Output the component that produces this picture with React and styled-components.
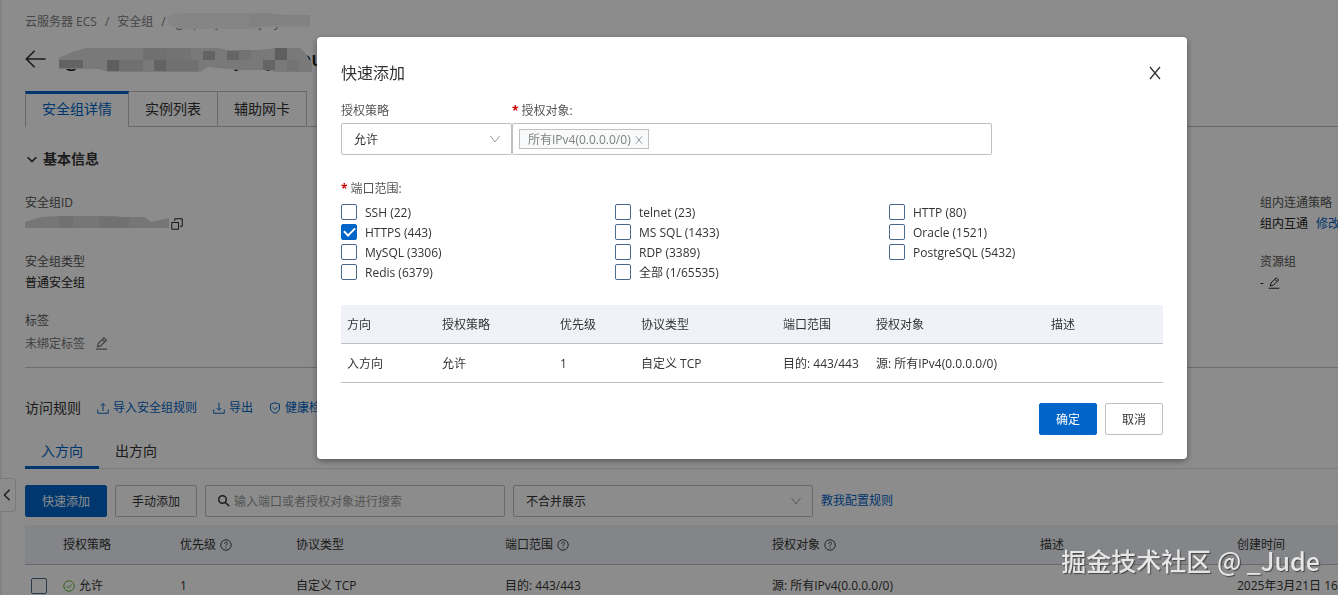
import React, { useState } from 'react';
import styled, { createGlobalStyle, css } from 'styled-components';

const PORTS = [
    'SSH (22)',
    'telnet (23)',
    'HTTP (80)',
    'HTTPS (443)',
    'MS SQL (1433)',
    'Oracle (1521)',
    'MySQL (3306)',
    'RDP (3389)',
    'PostgreSQL (5432)',
    'Redis (6379)',
    '全部 (1/65535)',
];

const RULE_COLUMNS = [
    { label: '授权策略', width: 117 },
    { label: '优先级', width: 116, help: true },
    { label: '协议类型', width: 209 },
    { label: '端口范围', width: 267, help: true },
    { label: '授权对象', width: 268, help: true },
    { label: '描述', width: 197 },
    { label: '创建时间' },
];

const PREVIEW_COLUMNS = [
    { label: '方向', width: 95, value: '入方向' },
    { label: '授权策略', width: 118, value: '允许' },
    { label: '优先级', width: 81, value: '1' },
    { label: '协议类型', width: 142, value: '自定义 TCP' },
    { label: '端口范围', width: 93, value: '目的: 443/443' },
    { label: '授权对象', width: 175, value: '源: 所有IPv4(0.0.0.0/0)' },
    { label: '描述', value: '' },
];

const ICONS = {
    back: <path d="M15 8H1M7 2L1 8l6 6" />,
    chevron: <path d="M3 6l5 5 5-5" />,
    down: <path d="M2 4l6 8 6-8" />,
    left: <path d="M11 2L5 8l6 6" />,
    close: <path d="M3 2l10 12M13 2L3 14" />,
    copy: <path d="M1 6h9v9H1zM5 4V1h10v10h-3" />,
    edit: <path d="M1 15h14M3 12l1-4 7-7 3 3-7 7zM9 3l3 3" />,
    upload: <path d="M1 10v5h14v-5M8 12V2M5 5l3-3 3 3" />,
    download: <path d="M1 10v5h14v-5M8 1v10M5 8l3 3 3-3" />,
    shield: <path d="M8 1l6 2v5c0 4-3 6-6 7-3-1-6-3-6-7V3zM5 7l3 3 4-4" />,
    search: <path d="M11 6a5 5 0 1 1-10 0a5 5 0 1 1 10 0M10 10l5 5" />,
    help: (
        <React.Fragment>
            <circle cx="8" cy="8" r="7" />
            <path d="M6 6.500c0-3 4-3 4-.5 0 1.600-2 1.600-2 3.500M8 11v1.400" />
        </React.Fragment>
    ),
    ok: (
        <React.Fragment>
            <circle cx="8" cy="8" r="7" />
            <path d="M5 8l2.500 2.500 4-4.500" />
        </React.Fragment>
    ),
};

const Icon = ({ name, size = 12, weight = 1.3 }) => (
    <IconSvg viewBox="0 0 16 16" width={size} height={size} strokeWidth={weight} aria-hidden="true">
        {ICONS[name]}
    </IconSvg>
);

const CrumbMask = () => (
    <Mask width="144" height="22" viewBox="0 0 144 22" aria-hidden="true">
        <g fill="#808080" fontSize="12">
            <text x="10" y="16">g</text>
            <text x="27" y="16">p</text>
            <text x="50" y="16">j</text>
            <text x="93" y="16">j</text>
            <text x="108" y="16">y</text>
        </g>
        <path d="M2 6Q6 2 20 2h60q20-1 30 2h34v12h-44l-10 2H20Q0 18 2 6z" fill="#f3f3f3" />
        <path d="M84 3l16-1 22 2h22v10h-30l-30 2z" fill="#ebebeb" />
    </Mask>
);

const TitleMask = () => (
    <Mask width="262" height="30" viewBox="0 0 262 30" aria-hidden="true">
        <g fill="#222" fontSize="20" fontWeight="600">
            <text x="8" y="22">g</text>
            <text x="46" y="22">p</text>
            <text x="176" y="22">y</text>
            <text x="208" y="22">y</text>
            <text x="241" y="22">ou</text>
        </g>
        <path d="M1 14l13-6 14-4h132l10 2h30l20-2h22l6 6 6 10v8h-34l-12-2h-28l-30-3-8 5H50l-9-3H1z" fill="#dcdcdc" />
        <path d="M1 16h24v8H1zM96 16h12v11H96zM145 7h12v9h-12z" fill="#b4b4b4" />
        <path d="M49 16h12v11H49zM217 4h12v12h-12z" fill="#acacac" />
        <path d="M85 4h24v12H85zM61 16h24v11H61zM108 16h32v11h-32z" fill="#cccccc" />
        <path d="M169 7h12v9h-12zM205 16h12v10h-12z" fill="#b8b8b8" />
        <path d="M109 4h24v12h-24zM181 6h12v10h-12zM229 16h12v11h-12z" fill="#d2d2d2" />
    </Mask>
);

const IdMask = () => (
    <Mask width="144" height="16" viewBox="0 0 144 16" aria-hidden="true">
        <path d="M0 6l16-5 18-1h54l12 1h20l6 5 18-4v10H0z" fill="#d8d8d8" />
        <path d="M34 0h14v12H34zM74 1h30v11H74z" fill="#cecece" />
    </Mask>
);

const DetailsPage = () => (
    <Page>
        <SideHandle aria-label="收起">
            <Icon name="left" size={14} weight={1.6} />
        </SideHandle>
        <Breadcrumb>
            <CrumbLink href="#ecs">云服务器 ECS</CrumbLink>
            <Slash>/</Slash>
            <CrumbLink href="#groups">安全组</CrumbLink>
            <Slash>/</Slash>
            <CrumbMask />
        </Breadcrumb>
        <TitleRow>
            <IconButton aria-label="返回">
                <Icon name="back" size={22} weight={1.2} />
            </IconButton>
            <TitleMask />
        </TitleRow>
        <Tabs>
            <Tab $active>安全组详情</Tab>
            <Tab>实例列表</Tab>
            <Tab>辅助网卡</Tab>
        </Tabs>
        <SectionTitle>
            <Icon name="chevron" size={14} weight={2} />
            基本信息
        </SectionTitle>
        <InfoGrid>
            <Info $gap={2}>
                <dt>安全组ID</dt>
                <dd>
                    <IdMask />
                    <Icon name="copy" size={12} />
                </dd>
            </Info>
            <Info $gap={8}>
                <dt>组内连通策略</dt>
                <dd>
                    组内互通<TextLink href="#edit">修改</TextLink>
                </dd>
            </Info>
            <Info>
                <dt>安全组类型</dt>
                <dd>普通安全组</dd>
            </Info>
            <Info $gap={4}>
                <dt>资源组</dt>
                <dd>
                    -<Icon name="edit" size={12} />
                </dd>
            </Info>
            <Info $gap={10} $muted>
                <dt>标签</dt>
                <dd>
                    未绑定标签 <Icon name="edit" size={13} weight={1.5} />
                </dd>
            </Info>
        </InfoGrid>
        <RuleHeader>
            <h2>访问规则</h2>
            <TextLink href="#import">
                <Icon name="upload" />
                导入安全组规则
            </TextLink>
            <TextLink href="#export">
                <Icon name="download" />
                导出
            </TextLink>
            <TextLink href="#check">
                <Icon name="shield" />
                健康检查
            </TextLink>
        </RuleHeader>
        <DirectionTabs>
            <Direction $active>入方向</Direction>
            <Direction>出方向</Direction>
        </DirectionTabs>
        <Toolbar>
            <Button $primary>快速添加</Button>
            <Button>手动添加</Button>
            <SearchBox>
                <Icon name="search" weight={2} />
                <input aria-label="搜索" placeholder="输入端口或者授权对象进行搜索" />
            </SearchBox>
            <SelectBox $width={300}>
                <select aria-label="展示方式">
                    <option>不合并展示</option>
                </select>
                <Icon name="down" />
            </SelectBox>
            <TextLink href="#guide">教我配置规则</TextLink>
        </Toolbar>
        <Table $pad={8} $head={40} $row={41}>
            <colgroup>
                <col width={30} />
                {RULE_COLUMNS.map(({ label, width }) => (
                    <col key={label} width={width} />
                ))}
            </colgroup>
            <thead>
                <tr>
                    <th />
                    {RULE_COLUMNS.map(({ label, help }) => (
                        <th key={label}>
                            <CellContent>
                                {label}
                                {help ? <Icon name="help" weight={1.2} /> : null}
                            </CellContent>
                        </th>
                    ))}
                </tr>
            </thead>
            <tbody>
                <tr>
                    <CheckCell>
                        <Checkbox aria-label="选择规则" />
                    </CheckCell>
                    <td>
                        <CellContent>
                            <Allowed>
                                <Icon name="ok" />
                            </Allowed>
                            允许
                        </CellContent>
                    </td>
                    <td>1</td>
                    <td>自定义 TCP</td>
                    <td>目的: 443/443</td>
                    <td>源: 所有IPv4(0.0.0.0/0)</td>
                    <td />
                    <td>2025年3月21日 16:4</td>
                </tr>
            </tbody>
        </Table>
    </Page>
);

const QuickAdd = () => {
    const [checked, setChecked] = useState(['HTTPS (443)']);
    const toggle = port =>
        setChecked(checked.includes(port) ? checked.filter(p => p !== port) : [...checked, port]);

    return (
        <Overlay>
            <Modal role="dialog" aria-labelledby="quick-add">
                <ModalHeader>
                    <h1 id="quick-add">快速添加</h1>
                    <IconButton aria-label="关闭">
                        <Icon name="close" size={16} />
                    </IconButton>
                </ModalHeader>
                <FieldRow>
                    <Field>
                        <Label htmlFor="policy">授权策略</Label>
                        <SelectBox $width={171}>
                            <select id="policy">
                                <option>允许</option>
                            </select>
                            <Icon name="down" />
                        </SelectBox>
                    </Field>
                    <Field $grow>
                        <Label htmlFor="target" $required>
                            授权对象:
                        </Label>
                        <TagInput>
                            <Tag>
                                所有IPv4(0.0.0.0/0)
                                <IconButton aria-label="移除">
                                    <Icon name="close" size={10} />
                                </IconButton>
                            </Tag>
                            <input id="target" />
                        </TagInput>
                    </Field>
                </FieldRow>
                <Ports>
                    <Legend>端口范围:</Legend>
                    <PortGrid>
                        {PORTS.map(port => (
                            <PortLabel key={port}>
                                <Checkbox
                                    checked={checked.includes(port)}
                                    onChange={() => toggle(port)}
                                />
                                <span>{port}</span>
                            </PortLabel>
                        ))}
                    </PortGrid>
                </Ports>
                <Table $pad={6} $head={39} $row={39}>
                    <colgroup>
                        {PREVIEW_COLUMNS.map(({ label, width }) => (
                            <col key={label} width={width} />
                        ))}
                    </colgroup>
                    <thead>
                        <tr>
                            {PREVIEW_COLUMNS.map(({ label }) => (
                                <th key={label}>{label}</th>
                            ))}
                        </tr>
                    </thead>
                    <tbody>
                        <tr>
                            {PREVIEW_COLUMNS.map(({ label, value }) => (
                                <td key={label}>{value}</td>
                            ))}
                        </tr>
                    </tbody>
                </Table>
                <Footer>
                    <Button $primary>确定</Button>
                    <Button>取消</Button>
                </Footer>
            </Modal>
        </Overlay>
    );
};

export default () => (
    <React.Fragment>
        <GlobalStyle />
        <DetailsPage />
        <QuickAdd />
        <Watermark>掘金技术社区 @ _Jude</Watermark>
    </React.Fragment>
);

const GlobalStyle = createGlobalStyle`
    * {
        box-sizing: border-box;
    }

    body {
        margin: 0;
        overflow: hidden;
        background: #ffffff;
    }

    body, button, input, select {
        font-family: 'Open Sans', 'Noto Sans CJK SC', sans-serif;
        font-size: 12px;
        line-height: 18px;
        color: #333333;
    }

    h1, h2, dl, dd, fieldset {
        margin: 0;
        padding: 0;
        border: 0;
        font-weight: 400;
    }
`;

const IconSvg = styled.svg`
    flex: none;
    fill: none;
    stroke: currentColor;
`;

const Mask = styled.svg`
    flex: none;
    display: block;
`;

const Page = styled.main`
    min-height: 100vh;
    padding-left: 25px;
    overflow: hidden;
    white-space: nowrap;
    box-shadow: inset 2px 0 0 #eeeeee;
`;

const IconButton = styled.button`
    display: flex;
    padding: 0;
    border: 0;
    background: none;
    color: inherit;
`;

const SideHandle = styled(IconButton)`
    position: absolute;
    left: 0;
    top: 478px;
    width: 16px;
    height: 34px;
    align-items: center;
    border: 1px solid #dedede;
    border-left: 0;
    border-radius: 0 4px 4px 0;
    background: #ffffff;
`;

const Breadcrumb = styled.nav`
    display: flex;
    align-items: center;
    height: 44px;
    color: #808080;
`;

const CrumbLink = styled.a`
    color: inherit;
    text-decoration: none;
`;

const Slash = styled.span`
    margin-left: 8px;

    &:not(:last-of-type) {
        margin-right: 8px;
    }
`;

const TitleRow = styled.div`
    display: flex;
    align-items: center;
    gap: 11px;
    height: 30px;
`;

const Tabs = styled.div`
    display: flex;
    height: 36px;
    margin-top: 17px;
    box-shadow: inset 0 -1px 0 #c0c0c0;
`;

const Tab = styled.button`
    padding: 0 16px;
    font-size: 14px;
    background: none;
    border: 1px solid #c0c0c0;
    border-left: 0;

    ${({ $active }) =>
        $active &&
        css`
            padding-bottom: 4px;
            color: #0064c8;
            background: #ffffff;
            border-left: 1px solid #c0c0c0;
            border-top: 3px solid #0064c8;
            border-bottom: 0;
        `}
`;

const SectionTitle = styled.h2`
    display: flex;
    align-items: center;
    gap: 4px;
    margin-top: 22px;
    font-size: 14px;
    line-height: 20px;
    font-weight: 600;
`;

const InfoGrid = styled.dl`
    display: grid;
    grid-template-columns: 1fr 78px;
    row-gap: 17px;
    margin-top: 23px;
    padding-bottom: 12px;
    border-bottom: 1px solid #c8c8c8;
`;

const Info = styled.div`
    line-height: 21px;

    dt {
        color: #555555;
    }

    dd {
        display: flex;
        align-items: center;
        gap: ${({ $gap }) => $gap}px;
        height: ${({ $muted }) => ($muted ? 24 : 21)}px;
        color: ${({ $muted }) => ($muted ? '#777777' : '#222222')};
    }
`;

const TextLink = styled.a`
    display: flex;
    align-items: center;
    gap: 4px;
    color: #0064c8;
    text-decoration: none;
`;

const RuleHeader = styled.div`
    display: flex;
    align-items: center;
    gap: 16px;
    margin-top: 30px;
    line-height: 20px;

    h2 {
        font-size: 14px;
    }
`;

const DirectionTabs = styled.div`
    display: flex;
    height: 33px;
    margin-top: 18px;
    box-shadow: inset 0 -1px 0 #dedede;
`;

const Direction = styled.button`
    padding: 0 16px;
    border: 0;
    border-bottom: 3px solid ${({ $active }) => ($active ? '#0064c8' : 'transparent')};
    background: none;
    font-size: 14px;
    color: ${({ $active }) => ($active ? '#0064c8' : '#333333')};
`;

const Toolbar = styled.div`
    display: flex;
    align-items: center;
    gap: 8px;
    margin: 16px 0 8px;
`;

const Button = styled.button`
    height: 32px;
    padding: 1px 16px 0;
    border: 1px solid ${({ $primary }) => ($primary ? '#0064c8' : '#c0c0c0')};
    border-radius: 2px;
    background: ${({ $primary }) => ($primary ? '#0064c8' : '#ffffff')};
    color: ${({ $primary }) => ($primary ? '#ffffff' : '#333333')};
`;

const SearchBox = styled.div`
    display: flex;
    align-items: center;
    gap: 4px;
    width: 300px;
    height: 32px;
    padding: 0 12px;
    border: 1px solid #c0c0c0;
    border-radius: 2px;

    input {
        flex: 1;
        padding: 2px 0 0;
        border: 0;
        background: none;
    }

    input::placeholder {
        color: #999999;
    }
`;

const SelectBox = styled.div`
    display: flex;
    align-items: center;
    width: ${({ $width }) => $width}px;
    height: 32px;
    padding: 0 10px 0 12px;
    border: 1px solid #c0c0c0;
    border-radius: 2px;
    background: #ffffff;

    select {
        flex: 1;
        padding: 2px 0 0;
        border: 0;
        background: none;
        appearance: none;
    }

    svg {
        color: #999999;
    }
`;

const Table = styled.table`
    width: 100%;
    table-layout: fixed;
    border-collapse: separate;
    border-spacing: 0;
    white-space: nowrap;

    th, td {
        padding: 1px 0 0 ${({ $pad }) => $pad}px;
        border-bottom: 1px solid #c0c0c0;
        text-align: left;
        font-weight: 400;
    }

    th {
        height: ${({ $head }) => $head}px;
        background: #eff3f8;
    }

    td {
        height: ${({ $row }) => $row}px;
    }
`;

const CellContent = styled.div`
    display: flex;
    align-items: center;
    gap: 4px;
`;

const CheckCell = styled.td`
    && {
        padding-left: 6px;
    }
`;

const Allowed = styled.span`
    display: flex;
    color: #5cb531;
`;

const Checkbox = styled.input.attrs({ type: 'checkbox' })`
    appearance: none;
    display: grid;
    place-items: center;
    width: 16px;
    height: 16px;
    margin: 0;
    border: 1px solid #49698c;
    border-radius: 2px;
    background: #ffffff;

    &:checked {
        border-color: #0064c8;
        background: #0064c8;
    }

    &:checked::before {
        content: '';
        width: 9px;
        height: 5px;
        margin-bottom: 3px;
        border: solid #ffffff;
        border-width: 0 0 2px 2px;
        transform: rotate(-45deg);
    }
`;

const Overlay = styled.div`
    position: fixed;
    inset: 0;
    display: flex;
    align-items: flex-start;
    padding: 37px 151px 37px 317px;
    background: rgba(0, 0, 0, 0.45);
`;

const Modal = styled.section`
    flex: 1;
    padding: 24px;
    border-radius: 4px;
    background: #ffffff;
    box-shadow: 0 2px 6px rgba(0, 0, 0, 0.4);
`;

const ModalHeader = styled.header`
    display: flex;
    align-items: center;
    justify-content: space-between;
    height: 24px;
    color: #333333;

    h1 {
        font-size: 16px;
        line-height: 24px;
    }
`;

const FieldRow = styled.div`
    display: flex;
    width: 651px;
    max-width: 100%;
    margin-top: 17px;
`;

const Field = styled.div`
    flex: ${({ $grow }) => ($grow ? 1 : 'none')};
`;

const required = css`
    &::before {
        content: '*';
        margin-right: 3px;
        font-weight: 700;
        color: #c80000;
    }
`;

const Label = styled.label`
    display: block;
    height: 21px;
    color: #555555;
    ${({ $required }) => $required && required}
`;

const TagInput = styled.div`
    display: flex;
    align-items: center;
    height: 32px;
    padding: 0 6px;
    border: 1px solid #c0c0c0;
    border-radius: 2px;

    input {
        flex: 1;
        border: 0;
        outline: 0;
    }
`;

const Tag = styled.span`
    display: flex;
    align-items: center;
    gap: 3px;
    height: 20px;
    padding: 1px 4px 0 8px;
    border: 1px solid #c0c0c0;
    background: #f7f9fa;
    color: #808080;
`;

const Ports = styled.fieldset`
    margin: 25px 0 23px;
`;

const Legend = styled.legend`
    padding: 0;
    height: 22px;
    color: #555555;
    ${required}
`;

const PortGrid = styled.div`
    display: grid;
    grid-template-columns: repeat(3, 1fr);
`;

const PortLabel = styled.label`
    display: flex;
    align-items: center;
    gap: 8px;
    height: 20px;

    span {
        padding-top: 2px;
    }
`;

const Footer = styled.footer`
    display: flex;
    justify-content: flex-end;
    gap: 8px;
    margin-top: 20px;
`;

const Watermark = styled.div`
    position: fixed;
    right: 18px;
    bottom: 17px;
    font-family: 'Noto Sans CJK SC', sans-serif;
    font-size: 25px;
    font-weight: 500;
    line-height: 36px;
    color: #e6e6e6;
    text-shadow: 1px 1px 1px #444444;
`;
